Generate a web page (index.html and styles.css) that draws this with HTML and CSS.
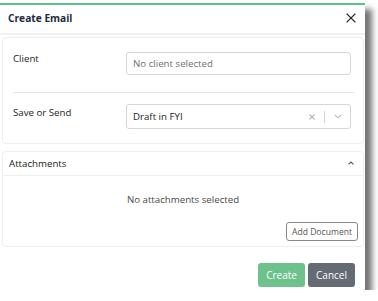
FILE: index.html
```html
<!DOCTYPE html>
<html>
<head>
<meta charset="utf-8">
<link rel="stylesheet" href="styles.css">
</head>
<body>
<div class="modal">
  <div class="modal-header">
    <span class="title">Create Email</span>
    <svg class="close" width="10" height="10" viewBox="0 0 10 10"><path d="M0.6 0.6L9.4 9.4M9.4 0.6L0.6 9.4" stroke="#1f2530" stroke-width="1.3" fill="none"/></svg>
  </div>
  <div class="modal-body">
    <div class="card form-card">
      <div class="row row-client">
        <div class="label">Client</div>
        <div class="input placeholder">No client selected</div>
      </div>
      <div class="divider"></div>
      <div class="row row-send">
        <div class="label">Save or Send</div>
        <div class="input select">
          <span class="value">Draft in FYI</span>
          <span class="indicators">
            <svg width="6" height="6" viewBox="0 0 6 6"><path d="M0.5 0.5L5.5 5.5M5.5 0.5L0.5 5.5" stroke="#b5b5b5" stroke-width="1.1" fill="none"/></svg>
            <span class="sep"></span>
            <svg width="8" height="5" viewBox="0 0 8 5"><path d="M0.8 0.8L4 3.8L7.2 0.8" stroke="#b5b5b5" stroke-width="1.1" fill="none"/></svg>
          </span>
        </div>
      </div>
    </div>
    <div class="card attach-card">
      <div class="attach-header">
        <span>Attachments</span>
        <svg class="caret" width="6" height="4" viewBox="0 0 6 4"><path d="M0.6 3.4L3 1L5.4 3.4" stroke="#555" stroke-width="1.1" fill="none"/></svg>
      </div>
      <div class="attach-body">
        <div class="empty">No attachments selected</div>
        <div class="attach-actions"><button class="btn-outline">Add Document</button></div>
      </div>
    </div>
  </div>
  <div class="modal-footer">
    <button class="btn btn-create">Create</button>
    <button class="btn btn-cancel">Cancel</button>
  </div>
</div>
</body>
</html>
```
FILE: styles.css
```css
html, body { margin: 0; padding: 0; background: #fff; }
body { font-family: "Open Sans", "Noto Sans", sans-serif; font-size: 9.7px; line-height: 13px; color: #222; }
.modal {
  margin-top: 3px;
  width: 365px;
  height: 287px;
  background: #fff;
  border-top: 2px solid #5fbf8c;
  box-sizing: border-box;
  box-shadow: 7px 6px 6px rgba(0,0,0,0.55);
  display: flex;
  flex-direction: column;
}
.modal-header {
  height: 30px;
  box-sizing: border-box;
  display: flex;
  align-items: flex-start;
  justify-content: space-between;
  padding: 7px 9px 0 8px;
  border-bottom: 2px solid #f1f1f1;
  flex-shrink: 0;
}
.title { font-weight: 700; font-size: 10.2px; color: #1d2b3c; }
.close { display: block; margin-top: 1px; }
.modal-body { padding: 2px 1px 0 2px; display: flex; flex-direction: column; gap: 7px; }
.card { border: 1px solid #eeeeee; border-radius: 4px; background: #fff; }
.form-card { padding: 14px 9px 14px 10px; }
.row { display: flex; align-items: flex-start; padding-right: 3px; }
.label { width: 113px; color: #222; }
.row-send .label { padding-top: 2px; }
.input {
  flex: 1;
  height: 23px;
  border: 1px solid #d6d6d6;
  border-radius: 3px;
  box-sizing: border-box;
  padding: 0 6px;
  display: flex;
  align-items: center;
}
.placeholder { color: #6f6f6f; }
.divider { height: 1px; background: #e4e4e4; margin: 17px 0 11px; }
.select { height: 25px; justify-content: space-between; color: #222; padding-right: 8px; }
.indicators { display: flex; align-items: center; gap: 9px; }
.indicators svg { display: block; }
.sep { width: 1px; height: 12px; background: #d6d6d6; }
.attach-header {
  height: 24px;
  box-sizing: border-box;
  display: flex;
  align-items: flex-start;
  justify-content: space-between;
  padding: 5px 9px 0 6px;
  border-bottom: 1px solid #efefef;
  color: #222;
}
.caret { display: block; margin-top: 4px; }
.attach-body { padding: 17px 5px 5px; }
.empty { text-align: center; color: #4a4a4a; }
.attach-actions { display: flex; justify-content: flex-end; margin-top: 16px; }
.btn-outline {
  font-family: inherit;
  font-size: 8.6px;
  color: #555;
  background: #fff;
  border: 1px solid #888;
  border-radius: 3px;
  height: 19px;
  width: 72px;
  padding: 0;
}
.modal-footer { display: flex; justify-content: flex-end; gap: 3px; padding: 16px 10px 0 0; }
.btn {
  font-family: inherit;
  font-size: 10px;
  color: #fff;
  border: none;
  border-radius: 3px;
  height: 24px;
  padding: 0;
}
.btn-create { background: #6dc28b; width: 47px; }
.btn-cancel { background: #646b74; width: 47px; }
```
